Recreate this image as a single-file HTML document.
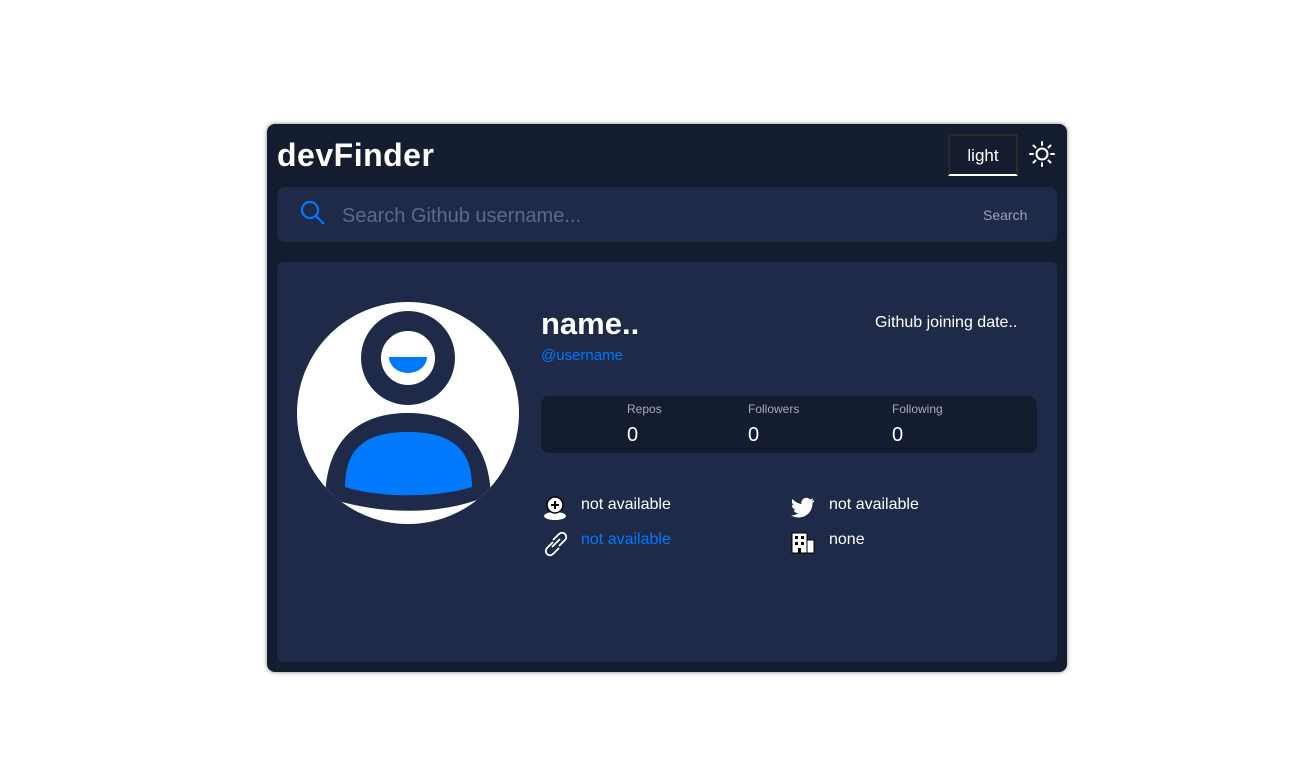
<!DOCTYPE html>
<html><head><style>
*{margin:0;padding:0;box-sizing:border-box}
body{width:1289px;height:778px;background:#fff;font-family:"Liberation Sans",sans-serif;position:relative;overflow:hidden}
.card{position:absolute;left:267px;top:124px;width:800px;height:548px;background:#141d2f;border-radius:8px;box-shadow:0 0 4px rgba(0,0,0,.5)}
.abs{position:absolute}
.logo{left:10px;top:13px;font-size:32px;font-weight:bold;color:#fff;letter-spacing:0.5px}
.toggle{left:681px;top:10px;width:70px;height:42px;border:2px solid #2a2a2a;border-bottom:2px solid #fff;color:#fff;font-size:17px;text-align:center;line-height:40px}
.search{left:10px;top:63px;width:780px;height:55px;background:#1f2a48;border-radius:8px}
.main{left:10px;top:138px;width:780px;height:400px;background:#1f2a48;border-radius:6px}
.w{color:#fff}
.stats{left:264px;top:134px;width:496px;height:57px;background:#141d2f;border-radius:8px}
</style></head><body>
<div class="card">
 <div class="abs logo">devFinder</div>
 <div class="abs toggle">light</div>
 <svg class="abs" style="left:762px;top:17px" width="26" height="26" viewBox="0 0 26 26" fill="none" stroke="#fff" stroke-width="2" stroke-linecap="round"><circle cx="13" cy="13" r="5.5"/><path d="M13 1v3M13 22v3M1 13h3M22 13h3M4.5 4.5l2 2M19.5 19.5l2 2M4.5 21.5l2-2M19.5 6.5l2-2"/></svg>
 <div class="abs search">
  <svg class="abs" style="left:22px;top:12px" width="28" height="28" viewBox="0 0 28 28" fill="none" stroke="#0079ff" stroke-width="2.2"><circle cx="11" cy="11" r="8"/><path d="M17 17l8 8"/></svg>
  <div class="abs" style="left:65px;top:18px;font-size:20px;color:#5b6a8a">Search Github username...</div>
  <div class="abs" style="left:706px;top:20px;font-size:14px;color:#9aa3b5">Search</div>
 </div>
 <div class="abs main">
  <svg class="abs" style="left:20px;top:40px" width="222" height="222" viewBox="0 0 222 222">
   <defs><clipPath id="c"><circle cx="111" cy="111" r="111"/></clipPath></defs>
   <circle cx="111" cy="111" r="111" fill="#fff"/>
   <g clip-path="url(#c)">
    <path d="M28 200 C28 130 70 111 111 111 C152 111 194 130 194 200 L194 230 L28 230Z" fill="#1f2a48"/>
    <path d="M48 185 C48 145 70 130 111 130 C152 130 175 145 175 185 C140 196 82 196 48 185Z" fill="#0079ff"/>
    <path d="M45 200 C90 212 140 212 180 198 L180 230 L45 230Z" fill="#fff"/>
   </g>
   <circle cx="111" cy="56" r="47" fill="#1f2a48"/>
   <circle cx="111" cy="56" r="27" fill="#fff"/>
   <path d="M92 55 H130 A19 16 0 0 1 92 55Z" fill="#0079ff"/>
  </svg>
  <div class="abs w" style="left:264px;top:44px;font-size:31px;font-weight:bold">name..</div>
  <div class="abs" style="left:264px;top:85px;font-size:15px;color:#0079ff">@username</div>
  <div class="abs w" style="left:598px;top:52px;font-size:16px">Github joining date..</div>
  <div class="abs stats">
   <div class="abs" style="left:86px;top:6px;font-size:12px;color:#aab">Repos</div>
   <div class="abs w" style="left:86px;top:28px;font-size:20px">0</div>
   <div class="abs" style="left:207px;top:6px;font-size:12px;color:#aab">Followers</div>
   <div class="abs w" style="left:207px;top:28px;font-size:20px">0</div>
   <div class="abs" style="left:351px;top:6px;font-size:12px;color:#aab">Following</div>
   <div class="abs w" style="left:351px;top:28px;font-size:20px">0</div>
  </div>
  <svg class="abs" style="left:266px;top:233px" width="24" height="26" viewBox="0 0 24 26"><ellipse cx="12" cy="21" rx="11" ry="4" fill="#fff"/><circle cx="12" cy="10" r="8" fill="#fff" stroke="#000" stroke-width="1.5"/><path d="M12 6v8M8 10h8" stroke="#000" stroke-width="2"/></svg>
  <div class="abs w" style="left:304px;top:234px;font-size:16px">not available</div>
  <svg class="abs" style="left:266px;top:268px" width="26" height="28" viewBox="0 0 26 28" fill="none" stroke="#fff" stroke-width="1.8"><path d="M9 17l8-8M10 12l-6 6a4 4 0 0 0 6 6l6-6M16 16l6-6a4 4 0 0 0-6-6l-6 6"/></svg>
  <div class="abs" style="left:304px;top:269px;font-size:16px;color:#0079ff">not available</div>
  <svg class="abs" style="left:514px;top:235px" width="24" height="22" viewBox="0 0 24 22"><path d="M23 3c-1 .5-2 .7-3 .8 1-.6 2-1.600 2-2.600-1 .6-2 1-3 1.200A5 5 0 0 0 10.500 7 14 14 0 0 1 1.500 2 5 5 0 0 0 3 8.500c-.8 0-1.600-.3-2.200-.6 0 2.400 1.700 4.400 4 4.900-.7.2-1.500.2-2.200.1a5 5 0 0 0 4.600 3.400A10 10 0 0 1 0 18.300 14 14 0 0 0 7.500 20.500c9 0 14-7.500 14-14v-.6c1-.7 1.800-1.600 1.500-2.900z" fill="#fff"/></svg>
  <div class="abs w" style="left:552px;top:234px;font-size:16px">not available</div>
  <svg class="abs" style="left:514px;top:270px" width="24" height="22" viewBox="0 0 24 22"><rect x="1" y="1" width="15" height="20" fill="#fff" stroke="#000"/><rect x="16" y="8" width="7" height="13" fill="#fff" stroke="#000"/><g fill="#000"><rect x="4" y="4" width="3" height="3"/><rect x="10" y="4" width="3" height="3"/><rect x="4" y="10" width="3" height="3"/><rect x="10" y="10" width="3" height="3"/><rect x="7" y="16" width="3" height="5"/></g></svg>
  <div class="abs w" style="left:552px;top:269px;font-size:16px">none</div>
 </div>
</div>
</body></html>
